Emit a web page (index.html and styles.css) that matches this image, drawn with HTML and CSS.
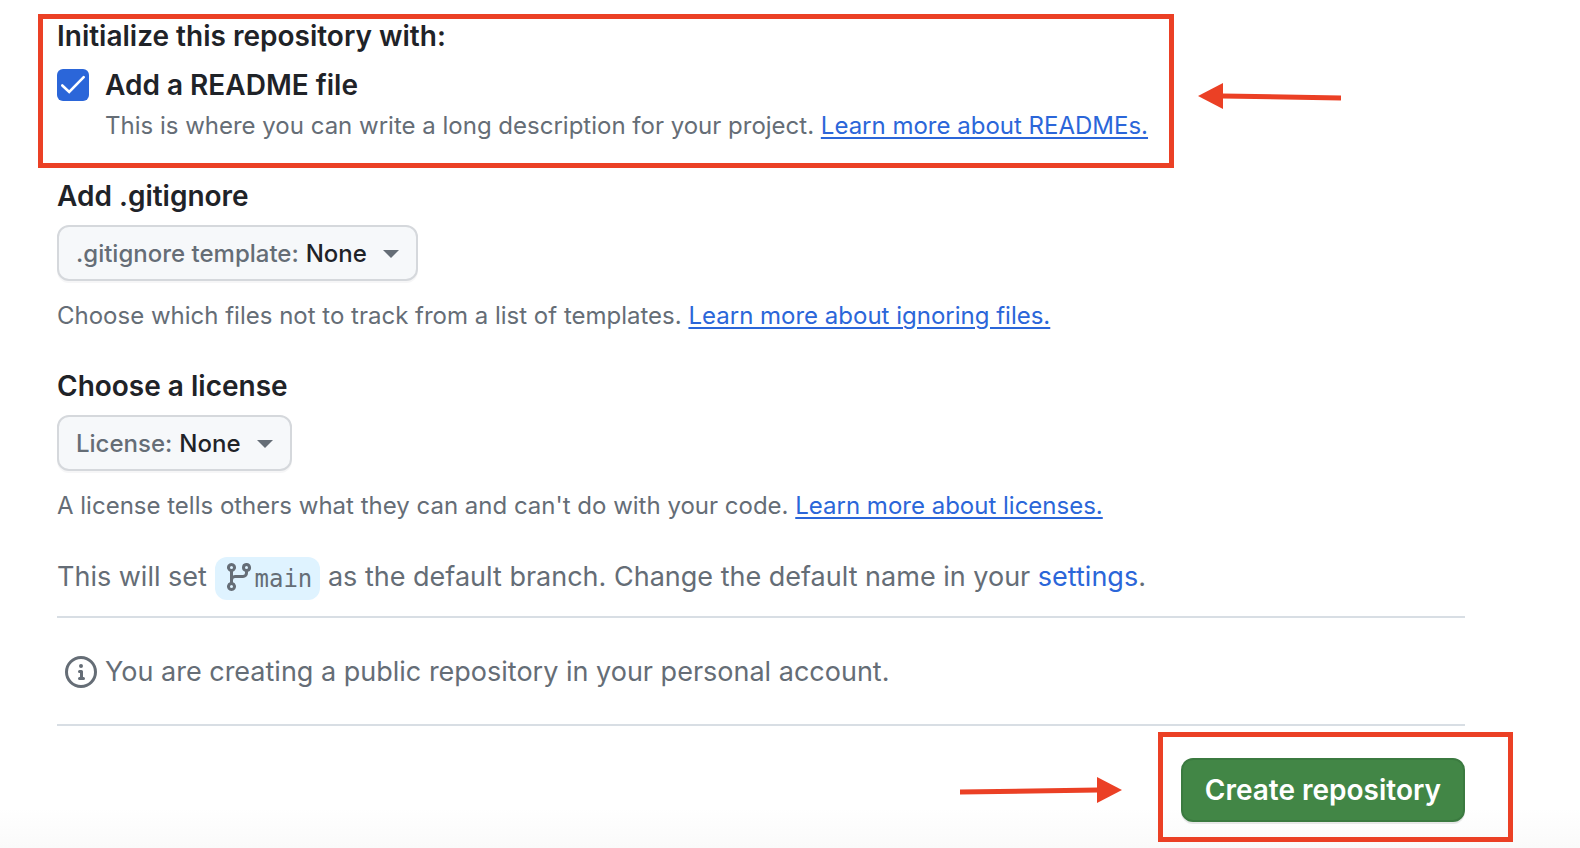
FILE: index.html
```html
<!DOCTYPE html>
<html lang="en">
<head>
<meta charset="utf-8">
<title>Create a new repository</title>
<link rel="stylesheet" href="styles.css">
</head>
<body>
<form class="page">
  <div class="readme-row">
    <section class="callout callout-readme">
      <h2 class="heading">Initialize this repository with:</h2>
      <div class="option">
        <input class="checkbox" type="checkbox" id="readme" checked>
        <label class="heading" for="readme">Add a README file</label>
      </div>
      <p class="note option-note">This is where you can write a long description for your project. <a href="#readmes">Learn more about READMEs.</a></p>
    </section>
    <svg class="arrow arrow-left" width="143" height="26" viewBox="0 0 143 26" aria-hidden="true">
      <path d="M24 13 143 15" stroke="#eb4025" stroke-width="5"/>
      <path d="M0 13 25 0V26Z" fill="#eb4025"/>
    </svg>
  </div>

  <section class="field">
    <h2 class="heading">Add .gitignore</h2>
    <button class="picker" type="button" aria-haspopup="menu"><span class="picker-label">.gitignore template:</span> <span>None</span><span class="caret"></span></button>
    <p class="note">Choose which files not to track from a list of templates. <a href="#ignoring">Learn more about ignoring files.</a></p>
  </section>

  <section class="field">
    <h2 class="heading">Choose a license</h2>
    <button class="picker" type="button" aria-haspopup="menu"><span class="picker-label">License:</span> <span>None</span><span class="caret"></span></button>
    <p class="note">A license tells others what they can and can't do with your code. <a href="#licenses">Learn more about licenses.</a></p>
  </section>

  <p class="branch-line">This will set <code class="branch"><svg width="32" height="32" viewBox="0 0 16 16" fill="currentColor" aria-hidden="true"><path d="M9.5 3.25a2.25 2.25 0 1 1 3 2.122V6A2.5 2.5 0 0 1 10 8.5H6a1 1 0 0 0-1 1v1.128a2.251 2.251 0 1 1-1.5 0V5.372a2.25 2.25 0 1 1 1.5 0v1.836A2.493 2.493 0 0 1 6 7h4a1 1 0 0 0 1-1v-.628A2.25 2.25 0 0 1 9.5 3.25Zm-6 0a.75.75 0 1 0 1.5 0 .75.75 0 0 0-1.5 0Zm8.25-.75a.75.75 0 1 0 0 1.5.75.75 0 0 0 0-1.5ZM4.25 12a.75.75 0 1 0 0 1.5.75.75 0 0 0 0-1.5Z"/></svg>main</code> as the default branch. Change the default name in your <a href="#settings">settings</a>.</p>

  <p class="visibility">
    <svg width="32" height="32" viewBox="0 0 16 16" fill="currentColor" aria-hidden="true"><path d="M0 8a8 8 0 1 1 16 0A8 8 0 0 1 0 8Zm8-6.5a6.5 6.5 0 1 0 0 13 6.5 6.5 0 0 0 0-13ZM6.5 7.75A.75.75 0 0 1 7.25 7h1a.75.75 0 0 1 .75.75v2.75h.25a.75.75 0 0 1 0 1.5h-2a.75.75 0 0 1 0-1.5h.25v-2h-.25a.75.75 0 0 1-.75-.75ZM8 6a1 1 0 1 1 0-2 1 1 0 0 1 0 2Z"/></svg>
    <span>You are creating a public repository in your personal account.</span>
  </p>

  <div class="actions">
    <svg class="arrow arrow-right" width="162" height="26" viewBox="0 0 162 26" aria-hidden="true">
      <path d="M0 15 138 13" stroke="#eb4025" stroke-width="5"/>
      <path d="M162 13 137 0V26Z" fill="#eb4025"/>
    </svg>
    <div class="callout callout-create">
      <button class="create" type="submit">Create repository</button>
    </div>
  </div>
</form>
</body>
</html>
```
FILE: styles.css
```css
* { box-sizing: border-box; }

body {
  margin: 0;
  min-height: 100vh;
  background: linear-gradient(to top, #fafafa, #fff 40px);
  color: #1f2328;
  font: 27px/42px Inter, "Noto Sans", sans-serif;
}

h2, p { margin: 0; }

a { color: #2b66d9; text-decoration: none; }

.page { padding: 14px 115px 0 57px; }

.heading {
  font-size: 28px;
  font-weight: 600;
}

.note {
  font-size: 24px;
  line-height: 36px;
  color: #656d76;
}

.note a {
  text-decoration: underline;
  text-decoration-thickness: 2px;
  text-underline-offset: 3px;
}

/* Red frames and arrows that point out the key steps */
.callout { border: 5px solid #eb4025; }

.readme-row {
  display: flex;
  align-items: center;
  gap: 24px;
  margin: 0 0 7px -19px;
}

.callout-readme { padding: 0 21px 19px 14px; }
.callout-readme h2 { line-height: 34px; }

.arrow { flex: none; }
.arrow-left { margin-top: 10px; }
.arrow-right { margin-top: 6px; }

.option {
  display: flex;
  align-items: center;
  gap: 16px;
  margin-top: 11px;
}

.option-note {
  margin-top: 2px;
  padding-left: 48px;
}

.checkbox {
  appearance: none;
  flex: none;
  width: 32px;
  height: 32px;
  margin: 0;
  border-radius: 6px;
  background: #2b66d9;
  display: grid;
  place-items: center;
}

.checkbox::before {
  content: "";
  width: 32px;
  height: 32px;
  background: url("data:image/svg+xml,%3Csvg xmlns='http://www.w3.org/2000/svg' viewBox='0 0 32 32' fill='none' stroke='white' stroke-width='2.6' stroke-linecap='round' stroke-linejoin='miter'%3E%3Cpath d='M5.3 16.5 12.2 23 26.7 8.2'/%3E%3C/svg%3E");
}

.field { margin-bottom: 31px; }

.picker {
  display: flex;
  align-items: center;
  gap: 7px;
  height: 56px;
  margin: 8px 0 17px;
  padding: 2px 17px 0;
  border: 2px solid #d5d8dc;
  border-radius: 12px;
  background: #f6f8fa;
  box-shadow: 0 2px 0 #1f23280a;
  color: #1f2328;
  font: 500 24px/36px Inter, "Noto Sans", sans-serif;
}

.picker-label { color: #656d76; }

.caret {
  margin-left: 9px;
  border: 8px solid transparent;
  border-top-color: #656d76;
  border-bottom: 0;
}

.branch-line {
  margin-top: 32px;
  padding-bottom: 18px;
  border-bottom: 2px solid #d8dee4;
  color: #656d76;
}

.branch {
  display: inline-flex;
  align-items: center;
  height: 43px;
  margin: -2px 0;
  padding: 0 8px;
  border-radius: 12px;
  background: #dff3ff;
  font: 24px/36px "DejaVu Sans Mono", monospace;
  vertical-align: middle;
}

.branch svg { margin-top: -4px; }

.visibility {
  display: flex;
  align-items: center;
  gap: 8px;
  padding: 33px 8px 31px;
  border-bottom: 2px solid #d8dee4;
  color: #656d76;
}

.actions {
  display: flex;
  align-items: center;
  justify-content: flex-end;
  gap: 36px;
  margin: 6px -48px 0 0;
}

.callout-create { padding: 21px 43px 15px 18px; }

.create {
  display: block;
  height: 64px;
  padding: 0 22px;
  border: 2px solid #3b7a40;
  border-radius: 12px;
  background: #428646;
  box-shadow: 0 2px 0 #1f23281a;
  color: #fff;
  font: 600 28px/42px Inter, "Noto Sans", sans-serif;
}
```
